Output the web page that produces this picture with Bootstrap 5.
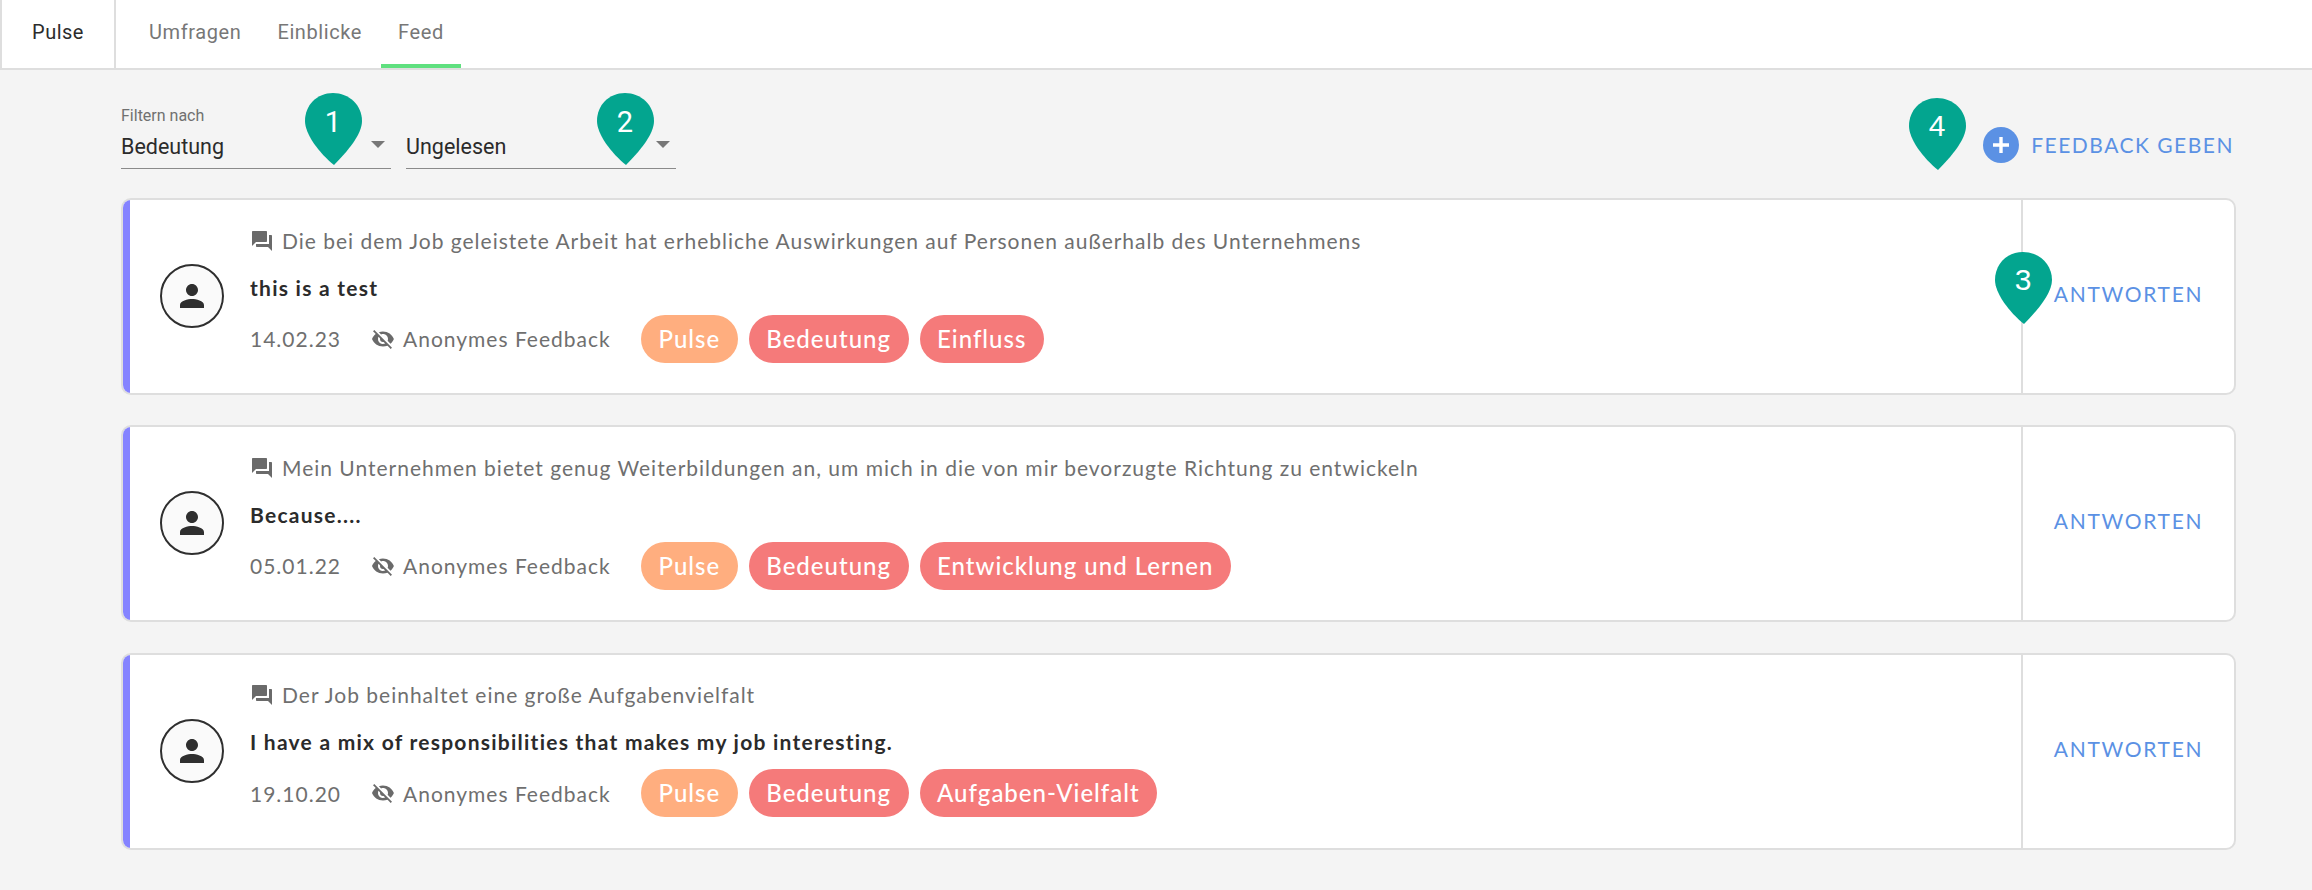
<!DOCTYPE html>
<html lang="de">
<head>
  <meta charset="UTF-8">
  <title>Pulse Feed</title>
  <link href="https://cdn.jsdelivr.net/npm/bootstrap@5.3.0/dist/css/bootstrap.min.css" rel="stylesheet">
  <style>
    body { background: #f4f4f4; font-family: "Lato", sans-serif; color: #2b2b2b; }
    .top-bar { height: 70px; background: #fff; border-bottom: 2px solid #dedede; border-left: 2px solid #dedede; }
    .brand-cell { width: 114px; border-right: 2px solid #dedede; font-family: "Roboto", sans-serif; font-size: 20px; letter-spacing: .5px; padding-bottom: 4px; }
    .tab-item { font-family: "Roboto", sans-serif; font-size: 20px; letter-spacing: .6px; color: #777; height: 68px; padding: 0 17px 4px; text-decoration: none; }
    .tab-on { border-bottom: 4px solid #5fe07f; padding-bottom: 0; }
    .tabs-wrap { padding-left: 16px; gap: 2px; }
    .page-wrap { padding: 0 76px 0 121px; }
    .filter-row { height: 128px; padding-top: 37px; }
    .filter-box { width: 270px; height: 62px; border-bottom: 1px solid #8a8a8a; }
    .filter-label { font-family: "Roboto", sans-serif; font-size: 16px; color: #707070; line-height: 18px; height: 18px; }
    .filter-value { font-family: "Roboto", sans-serif; font-size: 21.5px; line-height: 30px; margin-top: 7px; color: #2b2b2b; }
    .caret-down { width: 0; height: 0; border-left: 7px solid transparent; border-right: 7px solid transparent; border-top: 7px solid #777; margin: 16px 6px 0 0; }
    .give-link { font-size: 21px; letter-spacing: 1.5px; color: #5b91e4; text-decoration: none; margin: -8px 2px 0 0; height: 92px; }
    .plus-dot { width: 36px; height: 36px; border-radius: 50%; background: #5b91e4; }
    .fb-card { height: 197px; margin-bottom: 30.4px; border: 2px solid #dedede; border-radius: 10px; background: #fff; overflow: hidden; }
    .fb-accent { width: 7px; background: #8583ff; }
    .fb-main { padding-left: 30px; padding-bottom: 1px; }
    .avatar-ring { width: 64px; height: 64px; border-radius: 50%; border: 2px solid #2f2f2f; background: #fafafa; }
    .fb-text { padding-left: 26px; padding-bottom: 2px; }
    .fb-question { font-size: 21px; letter-spacing: .99px; color: #6f6f6f; line-height: 26px; }
    .fb-answer { font-size: 21px; letter-spacing: 1.25px; font-weight: 700; color: #2b2b2b; line-height: 26px; margin-top: 21px; }
    .fb-meta { font-size: 21px; letter-spacing: 1px; color: #6f6f6f; margin-top: 14px; height: 48px; }
    .fb-date { width: 121px; }
    .fb-anon { width: 270px; }
    .tag-row { gap: 11px; }
    .tag-pill { height: 48px; padding: 0 17.5px; border-radius: 24px; color: #fff; font-size: 24px; letter-spacing: 1px; font-weight: 500; }
    .tag-orange { background: #ffae7f; }
    .tag-red { background: #f57a7a; }
    .fb-side { width: 213px; border-left: 2px solid #dedede; padding-bottom: 6px; }
    .reply-link { font-size: 21px; letter-spacing: 1.7px; color: #5b91e4; text-decoration: none; }
    .pin-mark { position: absolute; width: 57px; height: 72px; }
    .pin-mark text { font-family: "Liberation Sans", sans-serif; font-size: 30px; fill: #fff; }
    .pin-mark .pin-din { font-family: "Roboto", sans-serif; font-size: 29px; }
    .pin-one { left: 305px; top: 93px; }
    .pin-two { left: 597px; top: 93px; }
    .pin-three { left: 1995px; top: 252px; }
    .pin-four { left: 1909px; top: 98px; }
  </style>
</head>
<body>

  <!-- Navigation -->
  <nav class="top-bar d-flex">
    <div class="brand-cell d-flex align-items-center justify-content-center">Pulse</div>
    <div class="tabs-wrap d-flex">
      <a class="tab-item d-flex align-items-center" href="#">Umfragen</a>
      <a class="tab-item d-flex align-items-center" href="#">Einblicke</a>
      <a class="tab-item tab-on d-flex align-items-center" href="#">Feed</a>
    </div>
  </nav>

  <div class="page-wrap">
    <!-- Filter -->
    <div class="filter-row d-flex align-items-start justify-content-between">
      <div class="d-flex" style="gap:15px">
        <div class="filter-box">
          <div class="filter-label">Filtern nach</div>
          <div class="d-flex justify-content-between"><span class="filter-value">Bedeutung</span><span class="caret-down"></span></div>
        </div>
        <div class="filter-box">
          <div class="filter-label"></div>
          <div class="d-flex justify-content-between"><span class="filter-value">Ungelesen</span><span class="caret-down"></span></div>
        </div>
      </div>
      <a class="give-link d-flex align-items-center gap-2" href="#">
        <span class="plus-dot d-flex align-items-center justify-content-center me-1">
          <svg width="18" height="18" viewBox="0 0 18 18"><path d="M9 1v16M1 9h16" stroke="#fff" stroke-width="3.4"/></svg>
        </span>
        FEEDBACK GEBEN
      </a>
    </div>

    <!-- Karte 1 -->
    <div class="fb-card d-flex">
      <div class="fb-accent"></div>
      <div class="fb-main flex-grow-1 d-flex align-items-center">
        <div class="avatar-ring d-flex align-items-center justify-content-center flex-shrink-0">
          <svg width="36" height="36" viewBox="0 0 24 24"><path fill="#2f2f2f" d="M12 12c2.200 0 4-1.800 4-4s-1.800-4-4-4-4 1.800-4 4 1.800 4 4 4zm0 2c-2.700 0-8 1.300-8 4v2h16v-2c0-2.700-5.300-4-8-4z"/></svg>
        </div>
        <div class="fb-text">
          <div class="fb-question d-flex align-items-center gap-2">
            <svg width="24" height="24" viewBox="0 0 24 24"><path fill="#6a6a6a" d="M21 6h-2v9H6v2c0 .6.4 1 1 1h11l4 4V7c0-.6-.4-1-1-1zm-4 6V3c0-.6-.4-1-1-1H3c-.6 0-1 .4-1 1v14l4-4h10c.6 0 1-.4 1-1z"/></svg>
            Die bei dem Job geleistete Arbeit hat erhebliche Auswirkungen auf Personen außerhalb des Unternehmens
          </div>
          <div class="fb-answer">this is a test</div>
          <div class="fb-meta d-flex align-items-center">
            <span class="fb-date">14.02.23</span>
            <span class="fb-anon d-flex align-items-center gap-2">
              <svg width="24" height="24" viewBox="0 0 24 24"><path fill="#6a6a6a" d="M12 7c2.800 0 5 2.200 5 5 0 .6-.1 1.300-.4 1.800l2.900 2.900c1.500-1.200 2.700-2.900 3.400-4.700-1.700-4.400-6-7.500-11-7.500-1.400 0-2.700.3-4 .7l2.200 2.200c.6-.3 1.200-.4 1.900-.4zM2 4.300l2.300 2.300.4.400C3.100 8.300 1.800 10 1 12c1.700 4.400 6 7.500 11 7.500 1.500 0 3-.3 4.400-.8l.4.400 2.900 2.900 1.300-1.300L3.300 3 2 4.300zm5.500 5.500 1.600 1.600c0 .2-.100.400-.100.600 0 1.700 1.300 3 3 3 .2 0 .4 0 .6-.1l1.600 1.600c-.7.300-1.400.5-2.200.5-2.800 0-5-2.200-5-5 0-.8.200-1.500.5-2.200z"/></svg>
              Anonymes Feedback
            </span>
            <div class="tag-row d-flex align-items-center">
              <span class="tag-pill tag-orange d-flex align-items-center">Pulse</span>
              <span class="tag-pill tag-red d-flex align-items-center">Bedeutung</span>
              <span class="tag-pill tag-red d-flex align-items-center">Einfluss</span>
            </div>
          </div>
        </div>
      </div>
      <div class="fb-side d-flex align-items-center justify-content-center"><a class="reply-link" href="#">ANTWORTEN</a></div>
    </div>

    <!-- Karte 2 -->
    <div class="fb-card d-flex">
      <div class="fb-accent"></div>
      <div class="fb-main flex-grow-1 d-flex align-items-center">
        <div class="avatar-ring d-flex align-items-center justify-content-center flex-shrink-0">
          <svg width="36" height="36" viewBox="0 0 24 24"><path fill="#2f2f2f" d="M12 12c2.200 0 4-1.800 4-4s-1.800-4-4-4-4 1.800-4 4 1.800 4 4 4zm0 2c-2.700 0-8 1.300-8 4v2h16v-2c0-2.700-5.300-4-8-4z"/></svg>
        </div>
        <div class="fb-text">
          <div class="fb-question d-flex align-items-center gap-2">
            <svg width="24" height="24" viewBox="0 0 24 24"><path fill="#6a6a6a" d="M21 6h-2v9H6v2c0 .6.4 1 1 1h11l4 4V7c0-.6-.4-1-1-1zm-4 6V3c0-.6-.4-1-1-1H3c-.6 0-1 .4-1 1v14l4-4h10c.6 0 1-.4 1-1z"/></svg>
            Mein Unternehmen bietet genug Weiterbildungen an, um mich in die von mir bevorzugte Richtung zu entwickeln
          </div>
          <div class="fb-answer">Because....</div>
          <div class="fb-meta d-flex align-items-center">
            <span class="fb-date">05.01.22</span>
            <span class="fb-anon d-flex align-items-center gap-2">
              <svg width="24" height="24" viewBox="0 0 24 24"><path fill="#6a6a6a" d="M12 7c2.800 0 5 2.200 5 5 0 .6-.1 1.300-.4 1.800l2.900 2.900c1.500-1.200 2.700-2.900 3.400-4.700-1.700-4.400-6-7.500-11-7.500-1.400 0-2.700.3-4 .7l2.200 2.200c.6-.3 1.200-.4 1.900-.4zM2 4.300l2.300 2.300.4.400C3.100 8.300 1.800 10 1 12c1.700 4.400 6 7.500 11 7.500 1.500 0 3-.3 4.400-.8l.4.400 2.900 2.900 1.300-1.300L3.300 3 2 4.300zm5.500 5.500 1.600 1.600c0 .2-.100.400-.100.600 0 1.700 1.300 3 3 3 .2 0 .4 0 .6-.1l1.600 1.600c-.7.300-1.400.5-2.200.5-2.800 0-5-2.200-5-5 0-.8.200-1.500.5-2.200z"/></svg>
              Anonymes Feedback
            </span>
            <div class="tag-row d-flex align-items-center">
              <span class="tag-pill tag-orange d-flex align-items-center">Pulse</span>
              <span class="tag-pill tag-red d-flex align-items-center">Bedeutung</span>
              <span class="tag-pill tag-red d-flex align-items-center">Entwicklung und Lernen</span>
            </div>
          </div>
        </div>
      </div>
      <div class="fb-side d-flex align-items-center justify-content-center"><a class="reply-link" href="#">ANTWORTEN</a></div>
    </div>

    <!-- Karte 3 -->
    <div class="fb-card d-flex">
      <div class="fb-accent"></div>
      <div class="fb-main flex-grow-1 d-flex align-items-center">
        <div class="avatar-ring d-flex align-items-center justify-content-center flex-shrink-0">
          <svg width="36" height="36" viewBox="0 0 24 24"><path fill="#2f2f2f" d="M12 12c2.200 0 4-1.800 4-4s-1.800-4-4-4-4 1.800-4 4 1.800 4 4 4zm0 2c-2.700 0-8 1.300-8 4v2h16v-2c0-2.700-5.300-4-8-4z"/></svg>
        </div>
        <div class="fb-text">
          <div class="fb-question d-flex align-items-center gap-2">
            <svg width="24" height="24" viewBox="0 0 24 24"><path fill="#6a6a6a" d="M21 6h-2v9H6v2c0 .6.4 1 1 1h11l4 4V7c0-.6-.4-1-1-1zm-4 6V3c0-.6-.4-1-1-1H3c-.6 0-1 .4-1 1v14l4-4h10c.6 0 1-.4 1-1z"/></svg>
            Der Job beinhaltet eine große Aufgabenvielfalt
          </div>
          <div class="fb-answer">I have a mix of responsibilities that makes my job interesting.</div>
          <div class="fb-meta d-flex align-items-center">
            <span class="fb-date">19.10.20</span>
            <span class="fb-anon d-flex align-items-center gap-2">
              <svg width="24" height="24" viewBox="0 0 24 24"><path fill="#6a6a6a" d="M12 7c2.800 0 5 2.200 5 5 0 .6-.1 1.300-.4 1.800l2.900 2.900c1.500-1.200 2.700-2.900 3.400-4.700-1.700-4.400-6-7.500-11-7.500-1.400 0-2.700.3-4 .7l2.200 2.200c.6-.3 1.200-.4 1.900-.4zM2 4.300l2.300 2.300.4.400C3.100 8.300 1.800 10 1 12c1.700 4.400 6 7.500 11 7.500 1.500 0 3-.3 4.400-.8l.4.400 2.900 2.900 1.300-1.300L3.300 3 2 4.300zm5.500 5.500 1.600 1.600c0 .2-.100.400-.100.600 0 1.700 1.300 3 3 3 .2 0 .4 0 .6-.1l1.600 1.600c-.7.300-1.400.5-2.200.5-2.800 0-5-2.200-5-5 0-.8.200-1.500.5-2.200z"/></svg>
              Anonymes Feedback
            </span>
            <div class="tag-row d-flex align-items-center">
              <span class="tag-pill tag-orange d-flex align-items-center">Pulse</span>
              <span class="tag-pill tag-red d-flex align-items-center">Bedeutung</span>
              <span class="tag-pill tag-red d-flex align-items-center">Aufgaben-Vielfalt</span>
            </div>
          </div>
        </div>
      </div>
      <div class="fb-side d-flex align-items-center justify-content-center"><a class="reply-link" href="#">ANTWORTEN</a></div>
    </div>
  </div>

  <!-- Markierungen -->
  <svg class="pin-mark pin-one" viewBox="0 0 57 72"><path fill="#03a58f" d="M28 0C12 0 0 12 0 28c0 13 14 32 29 44 14-14 28-31 28-44C57 12 44 0 28 0z"/><text class="pin-din" x="28" y="39" text-anchor="middle">1</text></svg>
  <svg class="pin-mark pin-two" viewBox="0 0 57 72"><path fill="#03a58f" d="M28 0C12 0 0 12 0 28c0 13 14 32 29 44 14-14 28-31 28-44C57 12 44 0 28 0z"/><text class="pin-din" x="28" y="39" text-anchor="middle">2</text></svg>
  <svg class="pin-mark pin-three" viewBox="0 0 57 72"><path fill="#03a58f" d="M28 0C12 0 0 12 0 28c0 13 14 32 29 44 14-14 28-31 28-44C57 12 44 0 28 0z"/><text x="28" y="38" text-anchor="middle">3</text></svg>
  <svg class="pin-mark pin-four" viewBox="0 0 57 72"><path fill="#03a58f" d="M28 0C12 0 0 12 0 28c0 13 14 32 29 44 14-14 28-31 28-44C57 12 44 0 28 0z"/><text x="28" y="38" text-anchor="middle">4</text></svg>

  <script src="https://cdn.jsdelivr.net/npm/bootstrap@5.3.0/dist/js/bootstrap.bundle.min.js"></script>
</body>
</html>
